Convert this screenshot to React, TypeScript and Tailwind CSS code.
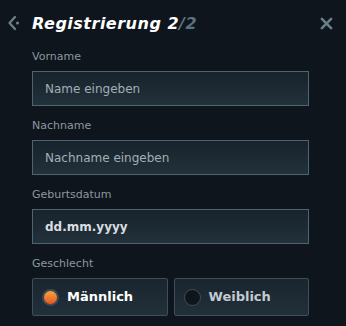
import React from "react";

const font = { fontFamily: '"DejaVu Sans", "Liberation Sans", sans-serif' };

function Field({ label, placeholder, filled }: { label: string; placeholder: string; filled?: boolean }) {
  return (
    <div className="flex flex-col">
      <div className="h-[14px] text-[11px] leading-[14px] text-[#8c979f] mb-[7px]">{label}</div>
      <div className="h-[35px] border border-[#4d6571] bg-gradient-to-b from-[#18232c] to-[#22313a] flex items-center pl-[12px]">
        <span className={filled ? "text-[12px] font-bold text-[#d8dde0]" : "text-[12px] text-[#a3aeb5]"}>{placeholder}</span>
      </div>
    </div>
  );
}

export default function App() {
  return (
    <div className="w-[346px] h-[326px] bg-[#0e151c] overflow-hidden" style={font}>
      <div className="h-[50px] flex items-center relative">
        <svg className="absolute left-[7px] top-[15px]" width="14" height="16" viewBox="0 0 14 16">
          <path d="M8 2 L2.5 8 L8 14" fill="none" stroke="#6f7f8a" strokeWidth="2.2" strokeLinecap="round" strokeLinejoin="round" />
          <circle cx="10.5" cy="8" r="1.6" fill="#6f7f8a" />
        </svg>
        <div className="pl-[32px] -mt-[2px] text-[16px] font-bold italic text-white tracking-[0.5px]">
          Registrierung 2<span className="text-[#5b7180]">/2</span>
        </div>
        <svg className="absolute left-[320px] top-[17px]" width="13" height="13" viewBox="0 0 14 14">
          <path d="M2 2 L12 12 M12 2 L2 12" stroke="#6a7d8a" strokeWidth="2.8" strokeLinecap="round" />
        </svg>
      </div>
      <div className="pl-[32px] pr-[37px] flex flex-col gap-[13px]">
        <Field label="Vorname" placeholder="Name eingeben" />
        <Field label="Nachname" placeholder="Nachname eingeben" />
        <Field label="Geburtsdatum" placeholder="dd.mm.yyyy" filled />
        <div className="flex flex-col">
          <div className="h-[14px] text-[11px] leading-[14px] text-[#8c979f] mb-[7px]">Geschlecht</div>
          <div className="flex gap-[6px]">
            <div className="flex-1 h-[38px] border border-[#3d4f5a] rounded-[2px] bg-gradient-to-b from-[#1a252e] to-[#22303a] flex items-center pl-[9px] gap-[8px]">
              <div className="w-[17px] h-[17px] rounded-full bg-[#3b4a55] flex items-center justify-center">
                <div className="w-[13px] h-[13px] rounded-full bg-gradient-to-b from-[#f7a040] to-[#e5561c]" />
              </div>
              <span className="text-[13px] font-bold text-white">Männlich</span>
            </div>
            <div className="flex-1 h-[38px] border border-[#3d4f5a] rounded-[2px] bg-gradient-to-b from-[#1a252e] to-[#22303a] flex items-center pl-[9px] gap-[8px]">
              <div className="w-[17px] h-[17px] rounded-full bg-[#0e151b] border border-[#3f505b]" />
              <span className="text-[13px] font-bold text-[#c3cbd0]">Weiblich</span>
            </div>
          </div>
        </div>
      </div>
    </div>
  );
}
